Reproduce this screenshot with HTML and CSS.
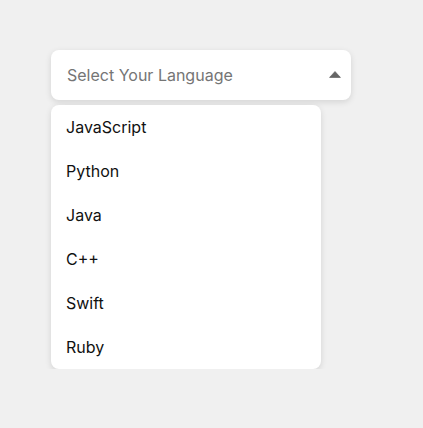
FILE: index.html
```html
<!DOCTYPE html>
<html lang="en">
<head>
<meta charset="utf-8">
<title>Select Your Language</title>
<link rel="stylesheet" href="styles.css">
</head>
<body>
<div class="page">
  <div class="select">
    <button class="select-trigger" type="button">
      <span class="placeholder">Select Your Language</span>
      <svg class="caret" width="12" height="7" viewBox="0 0 12 7" aria-hidden="true"><path d="M6 0.6 L11.4 6.4 H0.6 Z" fill="#666" stroke="#666" stroke-width="0.8" stroke-linejoin="round"/></svg>
    </button>
    <ul class="options">
      <li class="option">JavaScript</li>
      <li class="option">Python</li>
      <li class="option">Java</li>
      <li class="option">C++</li>
      <li class="option">Swift</li>
      <li class="option">Ruby</li>
    </ul>
  </div>
</div>
</body>
</html>
```
FILE: styles.css
```css
html, body {
  margin: 0;
  padding: 0;
  background: #f0f0f0;
  font-family: Inter, "Noto Sans", sans-serif;
}
.page {
  padding: 50px 0 0 51px;
}
.select {
  width: 300px;
  display: flex;
  flex-direction: column;
  gap: 5px;
}
.select-trigger {
  height: 50px;
  width: 300px;
  box-sizing: border-box;
  border: none;
  border-radius: 8px;
  background: #fff;
  box-shadow: 0 2px 6px rgba(0, 0, 0, 0.12);
  display: flex;
  align-items: center;
  justify-content: space-between;
  padding: 0 10px 0 16px;
  font-family: inherit;
  font-size: 16px;
  cursor: pointer;
}
.placeholder {
  color: #757575;
}
.caret {
  display: block;
  margin-top: -1px;
}
.options {
  list-style: none;
  margin: 0;
  padding: 0;
  width: 270px;
  background: #fff;
  border-radius: 8px;
  box-shadow: 0 2px 6px rgba(0, 0, 0, 0.12);
}
.option {
  height: 44px;
  display: flex;
  align-items: center;
  padding: 0 15px;
  font-size: 16px;
  color: #111;
}
```
